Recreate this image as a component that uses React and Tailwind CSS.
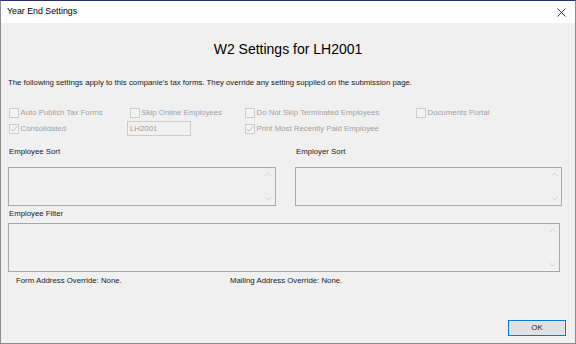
import React from "react";

const font = { fontFamily: '"Liberation Sans", Arial, sans-serif' };

function Check({ checked }) {
  return (
    <span className="w-[10px] h-[10px] border border-[#cccccc] bg-[#f4f4f4] flex items-center justify-center shrink-0">
      {checked && (
        <svg width="8" height="8" viewBox="0 0 8 8">
          <path d="M1 4.2 L3 6.2 L7 1.5" fill="none" stroke="#b5b5b5" strokeWidth="0.9" />
        </svg>
      )}
    </span>
  );
}

function CheckItem({ label, checked }) {
  return (
    <div className="flex items-center gap-[1.5px] text-[#a0a0a0]">
      <Check checked={checked} />
      <span className="leading-[10px]">{label}</span>
    </div>
  );
}

function ListBox({ className }) {
  return (
    <div className={`relative border border-[#a9a9a9] bg-[#f0f0f0] ${className}`}>
      <div className="absolute right-[1px] top-[1px] bottom-[1px] w-[12px] flex flex-col items-center justify-between py-[3px]">
        <svg width="7" height="5" viewBox="0 0 7 5">
          <path d="M0.5 4 L3.5 1 L6.5 4" fill="none" stroke="#c8c8c8" strokeWidth="0.8" />
        </svg>
        <svg width="7" height="5" viewBox="0 0 7 5">
          <path d="M0.5 1 L3.5 4 L6.5 1" fill="none" stroke="#c8c8c8" strokeWidth="0.8" />
        </svg>
      </div>
    </div>
  );
}

export default function App() {
  return (
    <div
      className="w-[576px] h-[344px] flex flex-col bg-[#f0f0f0] border-x border-b border-t border-x-[#8c8c8c] border-b-[#8c8c8c] border-t-[#2a2f6e] overflow-hidden"
      style={font}
    >
      {/* Title bar */}
      <div className="h-[22px] bg-white flex items-center justify-between pl-[6px] pr-[9px] shrink-0">
        <span className="text-[8.8px] text-black">Year End Settings</span>
        <svg width="9" height="9" viewBox="0 0 9 9">
          <path d="M0.5 0.5 L8.5 8.5 M8.5 0.5 L0.5 8.5" stroke="#222" strokeWidth="0.9" />
        </svg>
      </div>

      <div className="flex flex-col text-[7.8px] text-[#1a1a1a]">
        <div className="mt-[18px] h-[16px] leading-[16px] text-center text-[14px] text-black">
          W2 Settings for LH2001
        </div>

        <div className="mt-[21px] h-[10px] leading-[10px] pl-[7px]">
          The following settings apply to this companie's tax forms. They override any setting supplied on the submission page.
        </div>

        {/* Checkbox rows */}
        <div className="mt-[17px] pl-[8px] grid grid-cols-[121px_115px_171px_auto] grid-rows-[15px_15px] gap-y-[1px] items-center">
          <CheckItem label="Auto Publish Tax Forms" />
          <CheckItem label="Skip Online Employees" />
          <CheckItem label="Do Not Skip Terminated Employees" />
          <CheckItem label="Documents Portal" />
          <CheckItem label="Consolidated" checked />
          <div className="-ml-[3px] w-[64px] h-[15px] border border-[#cccccc] bg-[#f0f0f0] flex items-center pl-[2px] text-[#a0a0a0]">
            LH2001
          </div>
          <CheckItem label="Print Most Recently Paid Employee" checked />
          <div />
        </div>

        {/* Sort lists */}
        <div className="mt-[11px] flex gap-[19px] pl-[7px]">
          <div className="w-[268px] flex flex-col">
            <div className="h-[10px] leading-[10px] pl-[1px]">Employee Sort</div>
            <ListBox className="mt-[10px] h-[39px]" />
          </div>
          <div className="w-[267px] flex flex-col">
            <div className="h-[10px] leading-[10px] pl-[1px]">Employer Sort</div>
            <ListBox className="mt-[10px] h-[39px]" />
          </div>
        </div>

        <div className="mt-[3px] h-[10px] leading-[10px] pl-[8px]">Employee Filter</div>
        <div className="pl-[7px]">
          <ListBox className="mt-[4px] w-[552px] h-[49px]" />
        </div>

        <div className="mt-[4px] flex pl-[15px] h-[10px] leading-[10px]">
          <span className="w-[214px]">Form Address Override: None.</span>
          <span>Mailing Address Override: None.</span>
        </div>

        <div className="mt-[34px] flex justify-end pr-[9px]">
          <button className="w-[58px] h-[16px] border-[1.5px] border-[#0078d7] bg-[#e1e1e1] text-[7.8px] text-[#1a1a1a] leading-none">
            OK
          </button>
        </div>
      </div>
    </div>
  );
}
